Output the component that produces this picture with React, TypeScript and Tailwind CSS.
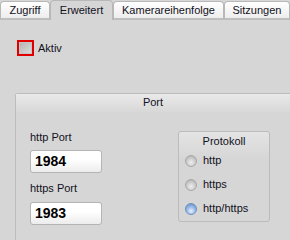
import React from 'react';

const tabs = [
  { label: 'Zugriff', w: 'w-[50px]', active: false },
  { label: 'Erweitert', w: 'w-[63px]', active: true },
  { label: 'Kamerareihenfolge', w: 'w-[111px]', active: false },
  { label: 'Sitzungen', w: 'w-[66px]', active: false },
];

const Radio: React.FC<{ label: string; checked?: boolean }> = ({ label, checked }) => (
  <div className="flex items-center h-[24px] pl-[6px] gap-[6px]">
    <span
      className={
        checked
          ? 'w-[12px] h-[12px] rounded-full border border-[#6d8fc0] bg-[radial-gradient(circle_at_50%_70%,#e8f2ff_0%,#9dbde8_45%,#5f86c4_100%)]'
          : 'w-[12px] h-[12px] rounded-full border border-[#a9a9a9] bg-[radial-gradient(circle_at_50%_65%,#f0f0f0_0%,#c9c9c9_55%,#a8a8a8_100%)]'
      }
    />
    <span className="text-[11px] text-[#111122]">{label}</span>
  </div>
);

const PortInput: React.FC<{ value: string }> = ({ value }) => (
  <div className="w-[72px] h-[23px] rounded-[3px] border border-[#b4b4b4] bg-gradient-to-b from-white from-40% to-[#ececec] flex items-center pl-[4px] text-[14px] font-bold text-black">
    {value}
  </div>
);

const App: React.FC = () => {
  return (
    <div className="w-[290px] h-[240px] overflow-hidden bg-[#d6d6d6] font-['Liberation_Sans',Arial,sans-serif] text-[11px] text-[#111122]">
      <div className="flex items-end h-[20px]">
        {tabs.map((t) =>
          t.active ? (
            <div key={t.label} className={`${t.w} h-[20px] flex items-center justify-center rounded-t-[4px] border border-b-0 border-[#b8b8b8] bg-[#d6d6d6]`}>
              {t.label}
            </div>
          ) : (
            <div key={t.label} className={`${t.w} h-[19px] flex items-center justify-center rounded-t-[4px] border border-[#b8b8b8] border-b-2 border-b-[#bebebe] bg-gradient-to-b from-white to-[#ededed]`}>
              {t.label}
            </div>
          ),
        )}
      </div>

      <div className="flex items-center gap-[4px] ml-[17px] mt-[20px]">
        <span className="w-[17px] h-[16px] border-2 border-[#e00000] flex items-center justify-center">
          <span className="w-[13px] h-[12px] border border-[#c4c4c4] bg-gradient-to-br from-[#b4b4b4] to-[#dcdcdc]" />
        </span>
        <span>Aktiv</span>
      </div>

      <div className="ml-[15px] mt-[36px] h-[170px] border border-r-0 border-[#bcbcbc] rounded-tl-[3px]">
        <div className="h-[18px] flex items-center justify-center bg-gradient-to-b from-[#e9e9e9] to-[#d8d8d8]">
          Port
        </div>
        <div className="flex">
          <div className="w-[162px] pl-[14px] pt-[19px] flex flex-col">
            <div className="h-[13px] leading-[13px]">http Port</div>
            <div className="mt-[6px]">
              <PortInput value="1984" />
            </div>
            <div className="mt-[9px] h-[13px] leading-[13px]">https Port</div>
            <div className="mt-[7px]">
              <PortInput value="1983" />
            </div>
          </div>
          <div className="mt-[19px] w-[92px] h-[91px] rounded-[3px] border border-[#bcbcbc] bg-gradient-to-b from-[#e4e4e4] to-[#d6d6d6] to-30%">
            <div className="h-[17px] pt-[1px] text-center">Protokoll</div>
            <Radio label="http" />
            <Radio label="https" />
            <Radio label="http/https" checked />
          </div>
        </div>
      </div>
    </div>
  );
};

export default App;
